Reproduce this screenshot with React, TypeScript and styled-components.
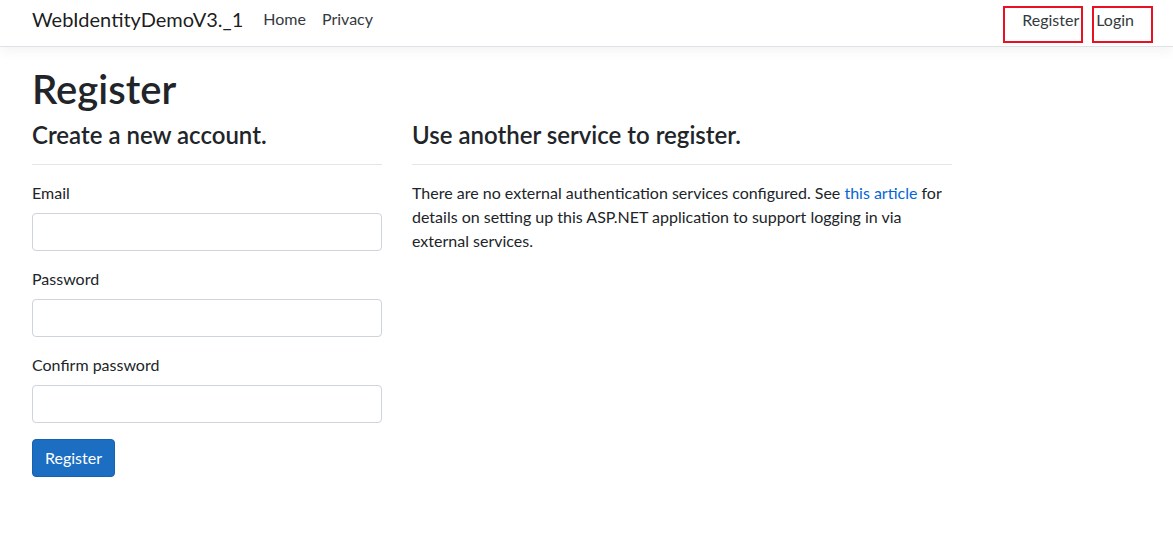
import React from 'react';
import styled, { createGlobalStyle } from 'styled-components';

const GlobalStyle = createGlobalStyle`
  * {
    box-sizing: border-box;
  }
  body {
    margin: 0;
    background: #fff;
    color: #212529;
    font-family: Lato, "Segoe UI", "Noto Sans", sans-serif;
    font-size: 16px;
    line-height: 1.5;
  }
`;

const Navbar = styled.nav`
  display: flex;
  align-items: center;
  height: 47px;
  padding: 0 20px 8px 32px;
  border-bottom: 1px solid #dee2e6;
  box-shadow: 0 4px 12px rgba(0, 0, 0, 0.05);
  margin-bottom: 18px;
`;

const Brand = styled.a`
  font-size: 20px;
  line-height: 30px;
  color: rgba(0, 0, 0, 0.9);
  text-decoration: none;
  margin-right: 12px;
`;

const NavList = styled.div<{ $right?: boolean }>`
  display: flex;
  align-items: center;
  gap: ${(p) => (p.$right ? '9px' : '0')};
  margin-left: ${(p) => (p.$right ? 'auto' : '0')};
`;

const NavLink = styled.a`
  color: #343a40;
  text-decoration: none;
  padding: 8px;
  line-height: 24px;
`;

const Marked = styled.a<{ $side: 'left' | 'right' }>`
  display: block;
  color: #343a40;
  text-decoration: none;
  line-height: 24px;
  height: 37px;
  margin-top: 10px;
  border: 2px solid #e81123;
  padding: 0 ${(p) => (p.$side === 'left' ? '2px' : '17px')} 0
    ${(p) => (p.$side === 'left' ? '17px' : '2px')};
`;

const Main = styled.main`
  padding: 0 32px 16px;
`;

const Title = styled.h1`
  font-size: 40px;
  font-weight: 600;
  line-height: 1.2;
  margin: 0 0 8px;
`;

const Row = styled.div`
  display: flex;
  gap: 30px;
  align-items: flex-start;
`;

const Column = styled.section<{ $width: number }>`
  width: ${(p) => p.$width}px;
`;

const Heading = styled.h4`
  font-size: 24px;
  font-weight: 600;
  line-height: 1.2;
  margin: 0;
`;

const Rule = styled.hr`
  border: 0;
  border-top: 1px solid rgba(0, 0, 0, 0.1);
  margin: 14px 0 16px;
`;

const Field = styled.div`
  margin-bottom: 16px;
`;

const Label = styled.label`
  display: block;
  margin-bottom: 8px;
`;

const Input = styled.input`
  display: block;
  width: 100%;
  height: 38px;
  padding: 6px 12px;
  font: inherit;
  color: #495057;
  border: 1px solid #ced4da;
  border-radius: 4px;
  background: #fff;
`;

const Button = styled.button`
  font: inherit;
  color: #fff;
  background: #1b6ec2;
  border: 1px solid #1861ac;
  border-radius: 4px;
  padding: 6px 12px;
  line-height: 24px;
  cursor: pointer;
`;

const Text = styled.p`
  margin: 0;
`;

const Link = styled.a`
  color: #0366d6;
  text-decoration: none;
`;

export default function App() {
  return (
    <>
      <GlobalStyle />
      <Navbar>
        <Brand href="#">WebIdentityDemoV3._1</Brand>
        <NavList>
          <NavLink href="#">Home</NavLink>
          <NavLink href="#">Privacy</NavLink>
        </NavList>
        <NavList $right>
          <Marked href="#" $side="left">Register</Marked>
          <Marked href="#" $side="right">Login</Marked>
        </NavList>
      </Navbar>
      <Main>
        <Title>Register</Title>
        <Row>
          <Column $width={350}>
            <form>
              <Heading>Create a new account.</Heading>
              <Rule />
              <Field>
                <Label htmlFor="email">Email</Label>
                <Input id="email" type="email" />
              </Field>
              <Field>
                <Label htmlFor="password">Password</Label>
                <Input id="password" type="password" />
              </Field>
              <Field>
                <Label htmlFor="confirm">Confirm password</Label>
                <Input id="confirm" type="password" />
              </Field>
              <Button type="submit">Register</Button>
            </form>
          </Column>
          <Column $width={540}>
            <Heading>Use another service to register.</Heading>
            <Rule />
            <Text>
              There are no external authentication services configured. See{' '}
              <Link href="#">this article</Link> for details on setting up this ASP.NET
              application to support logging in via external services.
            </Text>
          </Column>
        </Row>
      </Main>
    </>
  );
}
